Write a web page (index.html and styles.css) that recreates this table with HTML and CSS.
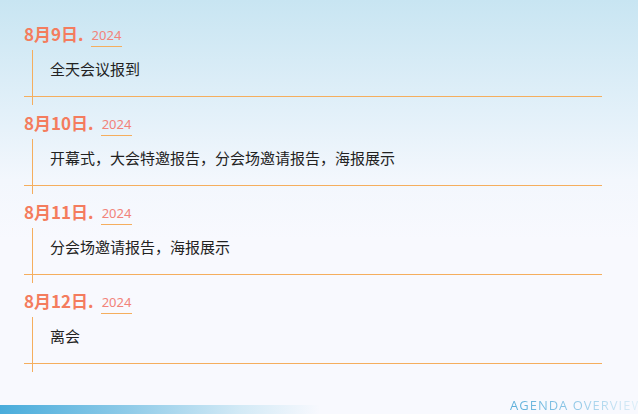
FILE: index.html
```html
<!DOCTYPE html>
<html lang="zh-CN">
<head>
    <meta charset="UTF-8">
    <meta name="viewport" content="width=device-width, initial-scale=1.0">
    <title>会议日程</title>
    <link rel="stylesheet" href="styles.css">
</head>
<body>
    <div class="page">
        <!-- Agenda list -->
        <div class="agenda">
            <div class="day">
                <div class="day-head"><span class="day-date">8月9日.</span><span class="day-year">2024</span></div>
                <div class="day-body">
                    <div class="day-text">全天会议报到</div>
                    <div class="day-line"></div>
                </div>
            </div>
            <div class="day">
                <div class="day-head"><span class="day-date">8月10日.</span><span class="day-year">2024</span></div>
                <div class="day-body">
                    <div class="day-text">开幕式，大会特邀报告，分会场邀请报告，海报展示</div>
                    <div class="day-line"></div>
                </div>
            </div>
            <div class="day">
                <div class="day-head"><span class="day-date">8月11日.</span><span class="day-year">2024</span></div>
                <div class="day-body">
                    <div class="day-text">分会场邀请报告，海报展示</div>
                    <div class="day-line"></div>
                </div>
            </div>
            <div class="day">
                <div class="day-head"><span class="day-date">8月12日.</span><span class="day-year">2024</span></div>
                <div class="day-body">
                    <div class="day-text">离会</div>
                    <div class="day-line"></div>
                </div>
            </div>
        </div>

        <!-- Footer -->
        <div class="footer">
            <div class="footer-bar"></div>
            <div class="footer-title">AGENDA OVERVIEW</div>
        </div>
    </div>
</body>
</html>
```

FILE: styles.css
```css
/* Page */
body {
    margin: 0;
    padding: 0;
    font-family: "Noto Sans CJK SC", "Noto Sans", sans-serif;
    background: #f8f9fe;
}

.page {
    height: 414px;
    overflow: hidden;
    display: flex;
    flex-direction: column;
    background: linear-gradient(to bottom, #c8e5f2 0, #e2f0f9 110px, #f3f7fd 180px, #f8f9fe 240px);
}

/* Agenda list */
.agenda {
    padding: 22px 36px 0 24px;
}

.day {
    margin-bottom: 6px;
}

.day-head {
    height: 24px;
    line-height: 24px;
    white-space: nowrap;
}

.day-date {
    font-size: 17px;
    font-weight: 700;
    color: #f47c5e;
}

.day-year {
    display: inline-block;
    margin-left: 7px;
    padding: 0 1px 3px;
    font-family: "Noto Sans", sans-serif;
    font-size: 13px;
    line-height: 16px;
    color: #f2837a;
    border-bottom: 1px solid #f5ae5e;
    vertical-align: 1px;
}

.day-body {
    margin: 4px 0 0 8px;
    padding: 8px 0 8px 0;
    border-left: 1px solid #f5ae5e;
}

.day-text {
    padding-left: 17px;
    font-size: 15px;
    line-height: 22px;
    color: #222;
    margin-bottom: 16px;
}

.day-line {
    height: 1px;
    margin-left: -9px;
    background: #f5ae5e;
}

/* Footer */
.footer {
    margin-top: auto;
    height: 17px;
    display: flex;
    align-items: flex-end;
}

.footer-bar {
    flex: 0 0 320px;
    height: 9px;
    background: linear-gradient(to right, #49acdb, #8fcbe8 40%, #d3eaf6 75%, rgba(255,255,255,0));
}

.footer-title {
    align-self: flex-start;
    margin-left: 190px;
    font-family: "Open Sans", sans-serif;
    font-size: 13px;
    line-height: 16px;
    letter-spacing: 1px;
    white-space: nowrap;
    background: linear-gradient(to right, #5aaed9 0, #8cc6e6 45%, #e6f2fa 100%);
    -webkit-background-clip: text;
    background-clip: text;
    color: transparent;
}
```
